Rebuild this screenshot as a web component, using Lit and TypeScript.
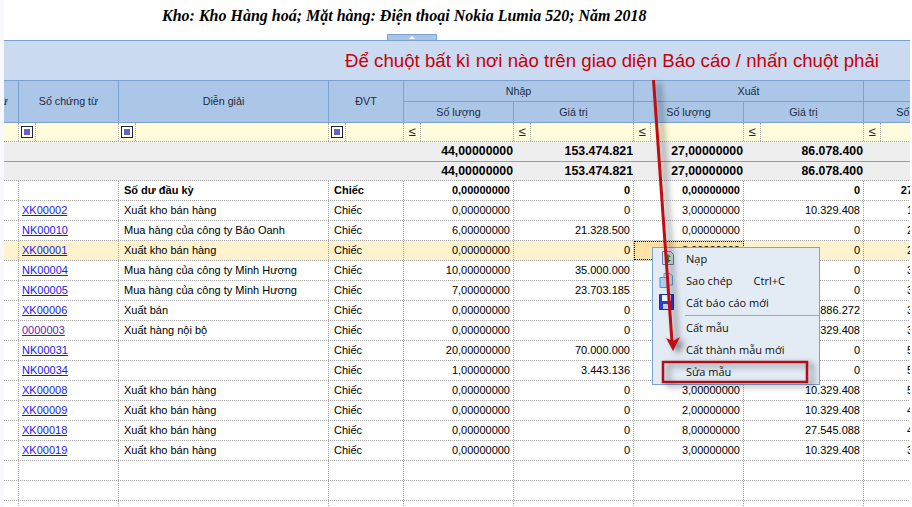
import { LitElement, html, css, svg } from 'lit';
import { customElement } from 'lit/decorators.js';
import { classMap } from 'lit/directives/class-map.js';

interface Row {
  doc: string;
  text: string;
  inQty: string;
  inVal: string;
  outQty: string;
  outVal: string;
  rest: string;
  visited?: boolean;
  selected?: boolean;
}

const z = '0,00000000';

const rows: Row[] = [
  { doc: 'XK00002', text: 'Xuất kho bán hàng', inQty: z, inVal: '0', outQty: '3,00000000', outVal: '10.329.408', rest: '1,00000000' },
  { doc: 'NK00010', text: 'Mua hàng của công ty Bảo Oanh', inQty: '6,00000000', inVal: '21.328.500', outQty: z, outVal: '0', rest: '2,00000000' },
  { doc: 'XK00001', text: 'Xuất kho bán hàng', inQty: z, inVal: '0', outQty: '3,00000000', outVal: '0', rest: '2,00000000', selected: true },
  { doc: 'NK00004', text: 'Mua hàng của công ty Minh Hương', inQty: '10,00000000', inVal: '35.000.000', outQty: z, outVal: '0', rest: '3,00000000' },
  { doc: 'NK00005', text: 'Mua hàng của công ty Minh Hương', inQty: '7,00000000', inVal: '23.703.185', outQty: z, outVal: '0', rest: '3,00000000' },
  { doc: 'XK00006', text: 'Xuất bán', inQty: z, inVal: '0', outQty: '1,00000000', outVal: '886.272', rest: '3,00000000' },
  { doc: '0000003', text: 'Xuất hàng nội bộ', inQty: z, inVal: '0', outQty: '3,00000000', outVal: '10.329.408', rest: '3,00000000', visited: true },
  { doc: 'NK00031', text: '', inQty: '20,00000000', inVal: '70.000.000', outQty: z, outVal: '0', rest: '5,00000000' },
  { doc: 'NK00034', text: '', inQty: '1,00000000', inVal: '3.443.136', outQty: z, outVal: '0', rest: '5,00000000' },
  { doc: 'XK00008', text: 'Xuất kho bán hàng', inQty: z, inVal: '0', outQty: '3,00000000', outVal: '10.329.408', rest: '5,00000000' },
  { doc: 'XK00009', text: 'Xuất kho bán hàng', inQty: z, inVal: '0', outQty: '2,00000000', outVal: '10.329.408', rest: '4,00000000' },
  { doc: 'XK00018', text: 'Xuất kho bán hàng', inQty: z, inVal: '0', outQty: '8,00000000', outVal: '27.545.088', rest: '4,00000000' },
  { doc: 'XK00019', text: 'Xuất kho bán hàng', inQty: z, inVal: '0', outQty: '3,00000000', outVal: '10.329.408', rest: '3,00000000' },
];

const COLS = '15px 100px 210px 75px 110px 120px 110px 120px 105px';

@customElement('app-root')
export class AppRoot extends LitElement {
  static override styles = css`
    :host {
      display: block;
      position: relative;
      width: 912px;
      height: 507px;
      overflow: hidden;
      background: #fff;
      font-family: 'Liberation Sans', Arial, sans-serif;
      font-size: 11px;
      color: #000;
    }

    .title {
      height: 31px;
      padding-left: 162px;
      font: italic bold 16px/31px 'Liberation Serif', 'Times New Roman', serif;
      color: #000;
      white-space: nowrap;
    }

    .tab-line {
      display: flex;
      height: 9px;
      padding-left: 387px;
      align-items: flex-end;
    }

    .tab {
      display: flex;
      justify-content: center;
      width: 48px;
      height: 5px;
      background: #a9c4e6;
      border: 1px solid #7ba2d0;
      border-bottom: none;
    }

    .tab i {
      width: 0;
      height: 0;
      margin-top: 1px;
      border: 3px solid transparent;
      border-top: none;
      border-bottom-color: #fff;
    }

    .grid {
      width: 906px;
      margin-left: 4px;
      height: 467px;
      overflow: hidden;
    }

    .band {
      display: flex;
      justify-content: flex-end;
      align-items: center;
      box-sizing: border-box;
      height: 41px;
      padding-right: 31px;
      background: #c9daf1;
      border-top: 1px solid #7ba2d0;
      border-bottom: 1px solid #7ba2d0;
      color: #c8000a;
      font-size: 18.67px;
      white-space: nowrap;
    }

    .head {
      display: grid;
      grid-template-rows: 21px 20px;
      width: max-content;
      background: #abc6e6;
      color: #1c2c44;
      font-size: 10.7px;
      border-bottom: 1px solid #7ba2d0;
    }

    .head div {
      display: flex;
      box-sizing: border-box;
      align-items: center;
      justify-content: center;
      border-right: 1px solid #7ba2d0;
      white-space: nowrap;
      overflow: hidden;
    }

    .head .tall {
      grid-row: span 2;
      padding-bottom: 2px;
    }

    .head .clip {
      justify-content: flex-end;
      padding-right: 10px;
    }

    .head .group {
      grid-column: span 2;
      border-bottom: 1px solid #7ba2d0;
    }

    .head .group.single {
      grid-column: span 1;
    }

    .head .tail {
      padding-left: 5px;
    }

    .row {
      display: grid;
      width: max-content;
      box-sizing: border-box;
      height: 20px;
      border-bottom: 1px dotted #a4a4a4;
    }

    .cell {
      box-sizing: border-box;
      padding: 0 3px 0 5px;
      line-height: 19px;
      border-right: 1px dotted #a4a4a4;
      white-space: nowrap;
      overflow: hidden;
    }

    .num {
      text-align: right;
    }

    .filter {
      height: 19px;
      background: #fffcdc;
    }

    .filter .cell {
      display: flex;
      padding: 0;
    }

    .op {
      box-sizing: border-box;
      width: 17px;
      height: 18px;
      border-right: 1px dotted #a4a4a4;
      text-align: center;
      line-height: 17px;
      font-size: 13px;
      color: #223;
    }

    .op.box {
      display: flex;
      align-items: center;
      justify-content: center;
    }

    .check {
      box-sizing: border-box;
      width: 12px;
      height: 12px;
      padding: 2px;
      background: #fff;
      border: 1px solid #1d2247;
    }

    .check i {
      display: block;
      width: 6px;
      height: 6px;
      background: #6262c8;
    }

    .total {
      background: #eee;
      font-size: 12.3px;
      font-weight: bold;
      border-bottom: 1px solid #7ba2d0;
    }

    .total.last {
      height: 19px;
      border-bottom: 1px dotted #a4a4a4;
    }

    .total .cell {
      border-right: none;
      line-height: 19px;
      padding-right: 1px;
    }

    .total.last .cell {
      line-height: 18px;
    }

    .open {
      font-weight: bold;
    }

    .selected {
      background: #fff2cf;
    }

    .selected .focus {
      background: #ffe2a6;
      outline: 1px dotted #000;
      outline-offset: -1px;
    }

    a {
      color: #1a1ae6;
      text-decoration: underline;
    }

    a.visited {
      color: #6a1ab0;
    }

    .doc {
      margin-left: -2px;
    }

    .gutter {
      position: absolute;
      left: 0;
      top: 0;
      bottom: 0;
      width: 4px;
      background: #f8f8fe;
    }

    .menu {
      position: absolute;
      left: 652px;
      top: 247px;
      box-sizing: border-box;
      width: 168px;
      height: 138px;
      background: #e3ebf5;
      border: 1px solid #7da3d0;
      font-family: 'Open Sans', 'Noto Sans', sans-serif;
      font-size: 11px;
      color: #111;
    }

    .item {
      display: flex;
      align-items: center;
      height: 22px;
      padding-left: 33px;
      position: relative;
      top: -1px;
      white-space: nowrap;
    }

    .item svg {
      position: absolute;
      left: 6px;
      top: 3px;
    }

    .item svg.nap {
      left: 8px;
    }

    .item span {
      margin-left: 21px;
    }

    .sep {
      height: 1px;
      margin: 1px 0 1px 32px;
      background: #a6a6a6;
    }

    .overlay {
      position: absolute;
      left: 0;
      top: 0;
    }

    .shadow {
      filter: drop-shadow(5px 3px 3px rgba(0, 0, 0, 0.5));
    }
  `;

  private renderRow(r: Row) {
    return html`
      <div class=${classMap({ row: true, selected: !!r.selected })} style="grid-template-columns:${COLS}">
        <div class="cell"></div>
        <div class="cell">
          <a class="doc ${r.visited ? 'visited' : ''}" href="#">${r.doc}</a>
        </div>
        <div class="cell">${r.text}</div>
        <div class="cell">Chiếc</div>
        <div class="cell num">${r.inQty}</div>
        <div class="cell num">${r.inVal}</div>
        <div class="cell num focus">${r.outQty}</div>
        <div class="cell num">${r.outVal}</div>
        <div class="cell num">${r.rest}</div>
      </div>
    `;
  }

  private renderEmpty() {
    return html`
      <div class="row" style="grid-template-columns:${COLS}">
        ${Array.from({ length: 9 }, () => html`<div class="cell"></div>`)}
      </div>
    `;
  }

  private renderTotal(last: boolean) {
    return html`
      <div class=${classMap({ row: true, total: true, last })} style="grid-template-columns:${COLS}">
        <div class="cell"></div>
        <div class="cell"></div>
        <div class="cell"></div>
        <div class="cell"></div>
        <div class="cell num">44,00000000</div>
        <div class="cell num">153.474.821</div>
        <div class="cell num">27,00000000</div>
        <div class="cell num">86.078.400</div>
        <div class="cell num"></div>
      </div>
    `;
  }

  private renderFilter() {
    const box = html`<div class="cell"><div class="op box"><div class="check"><i></i></div></div></div>`;
    const op = html`<div class="cell"><div class="op">≤</div></div>`;
    return html`
      <div class="row filter" style="grid-template-columns:${COLS}">
        <div class="cell"></div>
        ${box}${box}${box}${op}${op}${op}${op}${op}
      </div>
    `;
  }

  private renderMenu() {
    return html`
      <div class="menu">
        <div class="item">
          <svg class="nap" width="14" height="16" viewBox="0 0 14 16">
            <path d="M1.5 1.5h8l3 3v10h-11z" fill="#dfe3ee" stroke="#6f76a8" />
            <path d="M7 4l3 3H8v2H6V7H4z" fill="#2e9e3a" />
            <path d="M7 13l-3-3h2V9h2v1h2z" fill="#1f8a2e" />
          </svg>
          Nạp
        </div>
        <div class="item">
          <svg width="15" height="17" viewBox="0 0 15 17">
            <path d="M5 1.5h6l2.5 2.5v9H5z" fill="#cfe2f6" stroke="#5f9fd8" />
            <path d="M1 5.5h8v10H1z" fill="#a9d0f0" stroke="#4f94d0" />
          </svg>
          Sao chép<span>Ctrl+C</span>
        </div>
        <div class="item">
          <svg width="15" height="16" viewBox="0 0 15 16">
            <path d="M.5.5h14v15H.5z" fill="#2a3fd0" stroke="#1a2cb4" />
            <path d="M3 1h9v6H3z" fill="#f4f6ff" />
            <path d="M4 10h7v5H4z" fill="#c8d0f0" />
          </svg>
          Cất báo cáo mới
        </div>
        <div class="sep"></div>
        <div class="item">Cất mẫu</div>
        <div class="item">Cất thành mẫu mới</div>
        <div class="item">Sửa mẫu</div>
      </div>
    `;
  }

  private renderOverlay() {
    return html`
      <svg class="overlay" width="912" height="507" viewBox="0 0 912 507">
        ${svg`
          <g class="shadow">
            <path d="M653.5 80L672 342" stroke="#c00d14" stroke-width="3" fill="none" />
            <path d="M666 338L673 351L680 337L673 341z" fill="#c00d14" />
          </g>
          <rect class="shadow" x="663" y="362" width="144" height="20" fill="none" stroke="#b00d14" stroke-width="2.5" />
        `}
      </svg>
    `;
  }

  override render() {
    return html`
      <div class="title">Kho: Kho Hàng hoá; Mặt hàng: Điện thoại Nokia Lumia 520; Năm 2018</div>
      <div class="tab-line"><div class="tab"><i></i></div></div>
      <div class="grid">
        <div class="band">Để chuột bất kì nơi nào trên giao diện Báo cáo / nhấn chuột phải</div>
        <div class="head" style="grid-template-columns:${COLS}">
          <div class="tall clip">Ngày từ</div>
          <div class="tall">Số chứng từ</div>
          <div class="tall">Diễn giải</div>
          <div class="tall">ĐVT</div>
          <div class="group">Nhập</div>
          <div class="group">Xuất</div>
          <div class="group single"></div>
          <div>Số lượng</div>
          <div>Giá trị</div>
          <div>Số lượng</div>
          <div>Giá trị</div>
          <div class="tail">Số lượng</div>
        </div>
        ${this.renderFilter()} ${this.renderTotal(false)} ${this.renderTotal(true)}
        <div class="row open" style="grid-template-columns:${COLS}">
          <div class="cell"></div>
          <div class="cell"></div>
          <div class="cell">Số dư đầu kỳ</div>
          <div class="cell">Chiếc</div>
          <div class="cell num">0,00000000</div>
          <div class="cell num">0</div>
          <div class="cell num">0,00000000</div>
          <div class="cell num">0</div>
          <div class="cell num">27,00000000</div>
        </div>
        ${rows.map((r) => this.renderRow(r))} ${this.renderEmpty()} ${this.renderEmpty()} ${this.renderEmpty()}
      </div>
      <div class="gutter"></div>
      ${this.renderMenu()} ${this.renderOverlay()}
    `;
  }
}
